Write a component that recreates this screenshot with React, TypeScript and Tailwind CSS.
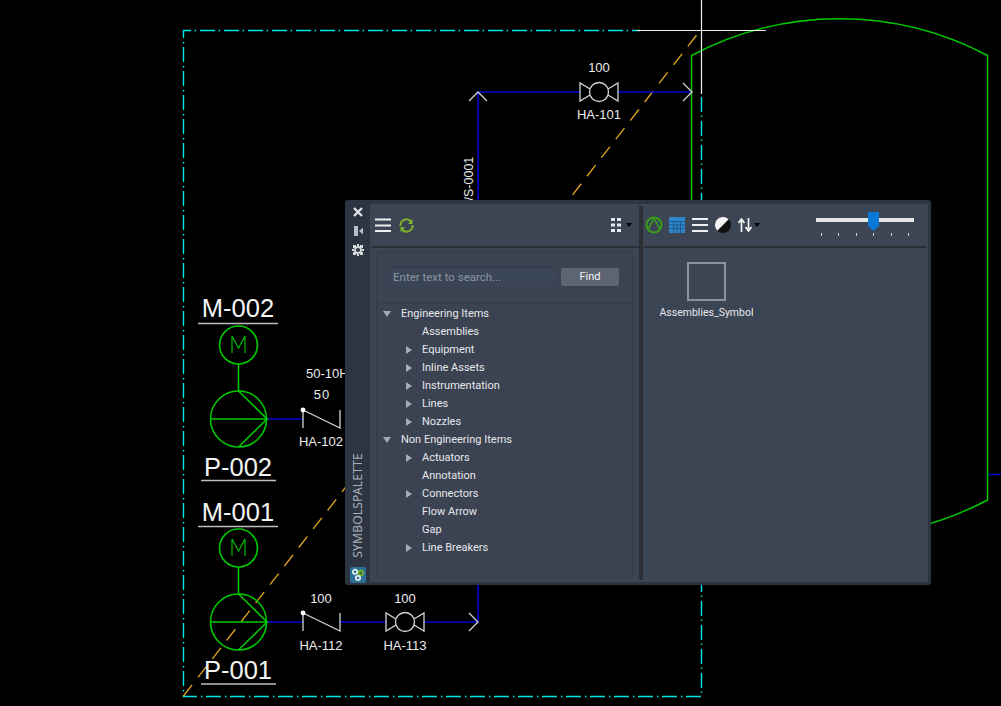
import React from "react";

const Caret = ({ open }: { open?: boolean }) =>
  open ? (
    <svg width="8" height="6" viewBox="0 0 8 6" className="shrink-0">
      <path d="M0 0H8L4 6Z" fill="#a5abb6" />
    </svg>
  ) : (
    <svg width="6" height="8" viewBox="0 0 6 8" className="shrink-0">
      <path d="M0 0V8L6 4Z" fill="#a5abb6" />
    </svg>
  );

const tree = [
  { label: "Engineering Items", level: 0, open: true },
  { label: "Assemblies", level: 1 },
  { label: "Equipment", level: 1, caret: true },
  { label: "Inline Assets", level: 1, caret: true },
  { label: "Instrumentation", level: 1, caret: true },
  { label: "Lines", level: 1, caret: true },
  { label: "Nozzles", level: 1, caret: true },
  { label: "Non Engineering Items", level: 0, open: true },
  { label: "Actuators", level: 1, caret: true },
  { label: "Annotation", level: 1 },
  { label: "Connectors", level: 1, caret: true },
  { label: "Flow Arrow", level: 1 },
  { label: "Gap", level: 1 },
  { label: "Line Breakers", level: 1, caret: true },
];

const Valve = ({ x, y }: { x: number; y: number }) => (
  <g stroke="#d4d4d4" strokeWidth="1.3" fill="none">
    <circle cx={x} cy={y} r="9.5" />
    <path d={`M${x - 9} ${y - 3}L${x - 19} ${y - 9}V${y + 9}L${x - 9} ${y + 3}`} />
    <path d={`M${x + 9} ${y - 3}L${x + 19} ${y - 9}V${y + 9}L${x + 9} ${y + 3}`} />
  </g>
);

const Check = ({ y }: { y: number }) => (
  <g stroke="#d4d4d4" strokeWidth="1.3" fill="none">
    <path d={`M303 ${y - 9}V${y + 9}`} />
    <path d={`M303 ${y - 9}L340 ${y + 9}V${y - 9}`} />
    <circle cx="303" cy={y - 9} r="2.4" fill="#fff" stroke="none" />
  </g>
);

const Pump = ({ y }: { y: number }) => (
  <g stroke="#00c800" strokeWidth="1.6" fill="none">
    <circle cx="238.5" cy={y - 74} r="19" />
    <path d={`M232 ${y - 66}V${y - 83}L238.5 ${y - 71}L245 ${y - 83}V${y - 66}`} strokeWidth="1.1" />
    <path d={`M238.5 ${y - 55}V${y - 28}`} />
    <circle cx="238.5" cy={y} r="28" />
    <path d={`M210 ${y}H267L238.5 ${y - 28}M267 ${y}L238.5 ${y + 28}`} />
  </g>
);

const Drawing = () => (
  <svg width="1001" height="706" viewBox="0 0 1001 706" className="block" fontFamily="'Liberation Sans', Arial, sans-serif">
    <path
      d="M701.5 97V696.5H183.5V30.5H640"
      stroke="#00e5e5"
      strokeWidth="1.4"
      fill="none"
      strokeDasharray="15 3.5 1.5 4"
    />
    <path d="M183.5 696L699 32" stroke="#dba11f" strokeWidth="1.4" fill="none" strokeDasharray="14 9.5" />

    <path d="M478 622V92H580M618 92H692" stroke="#0000d0" strokeWidth="1.7" fill="none" />
    <path d="M267 419H303M267 622H303M340 622H386M424 622H478M988 474.5H1001" stroke="#0000d0" strokeWidth="1.7" fill="none" />

    <path d="M691.5 500V55.5A316.5 316.5 0 0 1 987.5 55.5V500A316.5 316.5 0 0 1 691.5 500" stroke="#00c800" strokeWidth="1.5" fill="none" />

    <path d="M701.5 0V94M637 30.5H766" stroke="#f0f0f0" strokeWidth="1.2" fill="none" />

    <path d="M469 101L478 92L487 101M683 83L692 92L683 101M469 613L478 622L469 631" stroke="#d4d4d4" strokeWidth="1.3" fill="none" />

    <Valve x={599} y={92} />
    <Valve x={405} y={622} />
    <Check y={419} />
    <Check y={622} />
    <Pump y={419} />
    <Pump y={622} />

    <g fill="#ececec" fontSize="13" textAnchor="middle">
      <text x="599" y="72">100</text>
      <text x="599" y="119">HA-101</text>
      <text x="322" y="399" letterSpacing="1">50</text>
      <text x="321" y="446">HA-102</text>
      <text x="321" y="603">100</text>
      <text x="321" y="650">HA-112</text>
      <text x="405" y="603">100</text>
      <text x="405" y="650">HA-113</text>
      <text x="306" y="378" textAnchor="start">50-10H</text>
      <text transform="translate(473 200.5) rotate(-90)" textAnchor="start" fontSize="12.5">/S-0001</text>
    </g>

    <g fill="#f4f4f4" fontSize="25.5" textAnchor="middle">
      <text x="238" y="317">M-002</text>
      <text x="238" y="476">P-002</text>
      <text x="238" y="521">M-001</text>
      <text x="238" y="679">P-001</text>
    </g>
    <path d="M198 323.5H278M201 480.5H276M198 526.5H278M201 684H276" stroke="#bdbdbd" strokeWidth="1.4" />
  </svg>
);

const Palette = () => (
  <div className="absolute left-[345px] top-[200px] flex h-[385px] w-[586px] rounded-[3px] bg-[#2e3542] font-['Roboto',sans-serif] text-[11px] text-[#e6e8ec]">
    <div className="flex w-[25px] shrink-0 flex-col items-center pt-[5px]">
      <svg width="12" height="12" viewBox="0 0 12 12" className="mt-px">
        <path d="M2 2L10 10M10 2L2 10" stroke="#dfe2e6" strokeWidth="2.4" />
      </svg>
      <svg width="12" height="12" viewBox="0 0 12 12" className="mt-[7px]">
        <path d="M2 1H6V11H2ZM11 2.5V9.5L7 6Z" fill="#b9bec6" />
      </svg>
      <svg width="12" height="12" viewBox="0 0 12 12" className="mt-[7px]">
        <circle cx="6" cy="6" r="3" fill="none" stroke="#d5d8dd" strokeWidth="1.8" />
        <path d="M1 1H4V4H1ZM8 1H11V4H8ZM1 8H4V11H1ZM8 8H11V11H8ZM5 0H7V2H5ZM5 10H7V12H5ZM0 5H2V7H0ZM10 5H12V7H10Z" fill="#d5d8dd" />
      </svg>
      <div className="flex flex-1 items-end pb-[9px]">
        <span className="rotate-180 font-['Noto_Sans',sans-serif] text-[12px] leading-none tracking-[0.2px] text-[#a8afba] [writing-mode:vertical-rl]">
          SYMBOLSPALETTE
        </span>
      </div>
      <div className="mb-[2px] flex h-[16px] w-[16px] items-center justify-center rounded-[2px] bg-[#2b6f95]">
        <svg width="14" height="14" viewBox="0 0 14 14">
          <circle cx="9.8" cy="5" r="2.4" fill="#3d6d3c" stroke="#7ab52e" strokeWidth="1.5" />
          <circle cx="4" cy="3.8" r="2.2" fill="#2b6f95" stroke="#e8edf0" strokeWidth="1.7" />
          <circle cx="7" cy="10" r="2.2" fill="#2b6f95" stroke="#e8edf0" strokeWidth="1.7" />
        </svg>
      </div>
    </div>

    <div className="mb-[3px] mr-[3px] mt-[4px] flex min-w-0 flex-1 rounded-t-[3px] bg-[#3c4553]">
      <div className="flex w-[269px] shrink-0 flex-col">
        <div className="flex h-[42px] shrink-0 items-center pl-[5px] pr-[7px]">
          <svg width="16" height="14" viewBox="0 0 16 14">
            <path d="M0 1.5H16M0 7.5H16M0 13H16" stroke="#eef0f2" strokeWidth="2" />
          </svg>
          <svg width="17" height="17" viewBox="0 0 17 17" className="ml-[7px]">
            <path d="M2.5 9A6 6 0 0 1 13 4.5M14.5 8A6 6 0 0 1 4 12.5" fill="none" stroke="#7fb32c" strokeWidth="2" />
            <path d="M14.5 2V7H10ZM2.5 15V10H7Z" fill="#7fb32c" />
          </svg>
          <svg width="12" height="14" viewBox="0 0 12 14" className="ml-auto">
            <path d="M1 0H5V3H1ZM7 0H11V3H7ZM1 5.5H5V8.5H1ZM7 5.5H11V8.5H7ZM1 11H5V14H1ZM7 11H11V14H7Z" fill="#e6e8ec" />
          </svg>
          <svg width="6" height="4" viewBox="0 0 6 4" className="ml-[4px]">
            <path d="M0 0H6L3 4Z" fill="#000" />
          </svg>
        </div>
        <div className="ml-[2px] h-[2px] shrink-0 bg-[#2c2f35]" />
        <div className="mx-[6px] mb-[3px] mt-[3px] flex min-h-0 flex-1 flex-col border border-[#343b49] bg-[#3b4251]">
          <div className="flex h-[52px] shrink-0 items-start border-b border-[#343b49] pl-[13px] pt-[15px]">
            <div className="flex h-[19px] w-[166px] items-center border-t border-[#333a46] bg-[#3a4655] pl-[3px] pt-[1px] text-[11.5px] text-[#8d94a1]">
              Enter text to search...
            </div>
            <div className="ml-[5px] mt-px flex h-[18px] w-[58px] items-center justify-center rounded-[2px] bg-[#5d6473] pt-[1px] text-[#f2f3f5]">
              Find
            </div>
          </div>
          <div className="flex flex-col pt-[1px]">
            {tree.map((row) => (
              <div key={row.label} className="flex h-[18px] items-center whitespace-nowrap">
                {row.level === 0 ? (
                  <>
                    <span className="ml-[6px] flex w-[18px] shrink-0 items-center">
                      <Caret open />
                    </span>
                    <span>{row.label}</span>
                  </>
                ) : (
                  <>
                    <span className="ml-[29px] flex w-[16px] shrink-0 items-center">
                      {row.caret && <Caret />}
                    </span>
                    <span>{row.label}</span>
                  </>
                )}
              </div>
            ))}
          </div>
        </div>
      </div>

      <div className="mb-[2px] mt-[2px] w-[4px] shrink-0 bg-[#2c2f35]" />

      <div className="flex min-w-0 flex-1 flex-col">
        <div className="flex h-[42px] shrink-0 items-center pl-[2px]">
          <svg width="18" height="18" viewBox="0 0 18 18">
            <circle cx="9" cy="9" r="7.5" fill="none" stroke="#36a019" strokeWidth="2" />
            <path d="M3 13.5C4.8 9.5 6.8 6 9 3C11.2 6 13.2 9.5 15 13.5" fill="none" stroke="#36a019" strokeWidth="1.6" />
          </svg>
          <svg width="16" height="16" viewBox="0 0 16 16" className="ml-[6px]">
            <rect width="16" height="16" fill="#2f86c8" />
            <path d="M0.5 4.5H15.5M0.5 8H15.5M0.5 11.5H15.5M4.5 4V16M8 4V16M11.5 4V16" stroke="#1c5a8e" strokeWidth="1" />
          </svg>
          <svg width="16" height="14" viewBox="0 0 16 14" className="ml-[7px]">
            <path d="M0 1H16M0 7H16M0 13H16" stroke="#eef0f2" strokeWidth="2" />
          </svg>
          <svg width="16" height="16" viewBox="0 0 16 16" className="ml-[7px]">
            <circle cx="8" cy="8" r="8" fill="#101010" />
            <path d="M2.3 13.7A8 8 0 0 1 13.7 2.3Z" fill="#f4f4f4" />
          </svg>
          <svg width="14" height="14" viewBox="0 0 14 14" className="ml-[7px]">
            <path d="M3.5 14V2M0.5 5L3.5 1L6.5 5M10.5 0V12M7.5 9L10.5 13L13.5 9" fill="none" stroke="#f2f3f5" strokeWidth="1.7" />
          </svg>
          <svg width="6" height="4" viewBox="0 0 6 4" className="ml-[2px]">
            <path d="M0 0H6L3 4Z" fill="#000" />
          </svg>
          <svg width="100" height="26" viewBox="0 0 100 26" className="ml-[56px]">
            <rect x="0" y="6" width="98" height="4" fill="#e6e6e6" />
            <path d="M52 0H63V14L57.5 19L52 14Z" fill="#0a78d6" />
            <path d="M5.5 21V24M22.5 21V24M40.5 21V24M57.5 21V24M75.5 21V24M92.5 21V24" stroke="#cfd2d6" strokeWidth="1" />
          </svg>
        </div>
        <div className="mr-[2px] h-[2px] shrink-0 bg-[#2c2f35]" />
        <div className="flex w-[127px] flex-col items-center pt-[14px]">
          <div className="h-[39px] w-[39px] border-2 border-[#8a919c]" />
          <span className="mt-[4px] whitespace-nowrap text-[10.5px]">Assemblies_Symbol</span>
        </div>
      </div>
    </div>
  </div>
);

export default function App() {
  return (
    <div className="relative h-[706px] w-[1001px] overflow-hidden bg-black">
      <Drawing />
      <Palette />
    </div>
  );
}
